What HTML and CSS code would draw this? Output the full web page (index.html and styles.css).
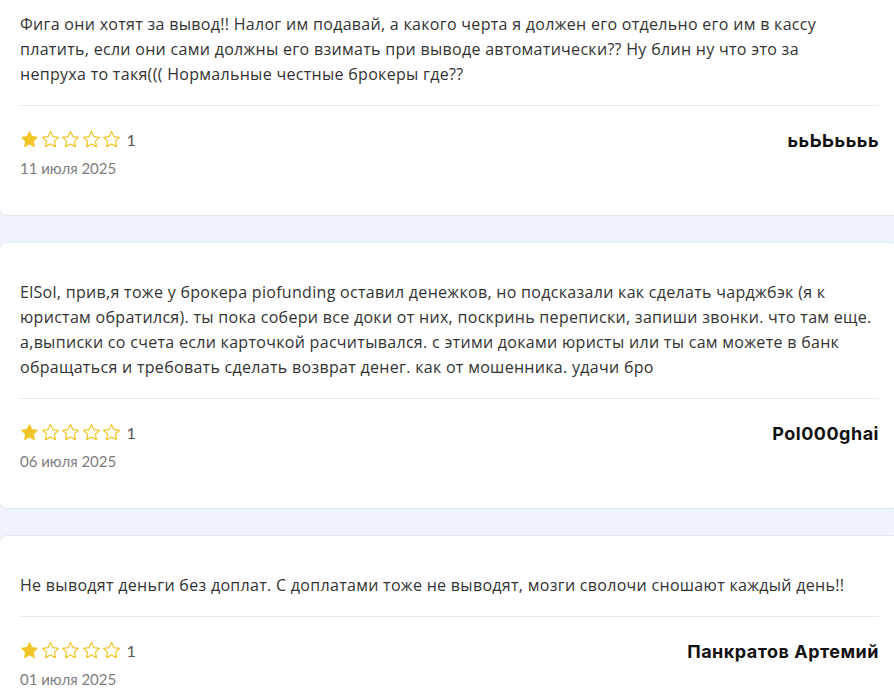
FILE: index.html
```html
<!DOCTYPE html>
<html lang="ru">
<head>
<meta charset="utf-8">
<title>Отзывы</title>
<link rel="stylesheet" href="styles.css">
</head>
<body>
<div class="reviews">
  <div class="card">
    <p class="text">Фига они хотят за вывод!! Налог им подавай, а какого черта я должен его отдельно его им в кассу платить, если они сами должны его взимать при выводе автоматически?? Ну блин ну что это за<br>непруха то такя((( Нормальные честные брокеры где??</p>
    <div class="footer">
      <div class="meta">
        <div class="rating">
          <svg class="star" viewBox="0 0 24 24"><polygon class="on" points="12 2 15.09 8.26 22 9.27 17 14.14 18.18 21.02 12 17.77 5.82 21.02 7 14.14 2 9.27 8.91 8.26"/></svg>
          <svg class="star" viewBox="0 0 24 24"><polygon class="off" points="12 2 15.09 8.26 22 9.27 17 14.14 18.18 21.02 12 17.77 5.82 21.02 7 14.14 2 9.27 8.91 8.26"/></svg>
          <svg class="star" viewBox="0 0 24 24"><polygon class="off" points="12 2 15.09 8.26 22 9.27 17 14.14 18.18 21.02 12 17.77 5.82 21.02 7 14.14 2 9.27 8.91 8.26"/></svg>
          <svg class="star" viewBox="0 0 24 24"><polygon class="off" points="12 2 15.09 8.26 22 9.27 17 14.14 18.18 21.02 12 17.77 5.82 21.02 7 14.14 2 9.27 8.91 8.26"/></svg>
          <svg class="star" viewBox="0 0 24 24"><polygon class="off" points="12 2 15.09 8.26 22 9.27 17 14.14 18.18 21.02 12 17.77 5.82 21.02 7 14.14 2 9.27 8.91 8.26"/></svg>
          <span class="score">1</span>
        </div>
        <div class="date">11 июля 2025</div>
      </div>
      <div class="author">ььЬЬьььь</div>
    </div>
  </div>

  <div class="card">
    <p class="text">ElSol, прив,я тоже у брокера piofunding оставил денежков, но подсказали как сделать чарджбэк (я к юристам обратился). ты пока собери все доки от них, поскринь переписки, запиши звонки. что там еще. а,выписки со счета если карточкой расчитывался. с этими доками юристы или ты сам можете в банк обращаться и требовать сделать возврат денег. как от мошенника. удачи бро</p>
    <div class="footer">
      <div class="meta">
        <div class="rating">
          <svg class="star" viewBox="0 0 24 24"><polygon class="on" points="12 2 15.09 8.26 22 9.27 17 14.14 18.18 21.02 12 17.77 5.82 21.02 7 14.14 2 9.27 8.91 8.26"/></svg>
          <svg class="star" viewBox="0 0 24 24"><polygon class="off" points="12 2 15.09 8.26 22 9.27 17 14.14 18.18 21.02 12 17.77 5.82 21.02 7 14.14 2 9.27 8.91 8.26"/></svg>
          <svg class="star" viewBox="0 0 24 24"><polygon class="off" points="12 2 15.09 8.26 22 9.27 17 14.14 18.18 21.02 12 17.77 5.82 21.02 7 14.14 2 9.27 8.91 8.26"/></svg>
          <svg class="star" viewBox="0 0 24 24"><polygon class="off" points="12 2 15.09 8.26 22 9.27 17 14.14 18.18 21.02 12 17.77 5.82 21.02 7 14.14 2 9.27 8.91 8.26"/></svg>
          <svg class="star" viewBox="0 0 24 24"><polygon class="off" points="12 2 15.09 8.26 22 9.27 17 14.14 18.18 21.02 12 17.77 5.82 21.02 7 14.14 2 9.27 8.91 8.26"/></svg>
          <span class="score">1</span>
        </div>
        <div class="date">06 июля 2025</div>
      </div>
      <div class="author">Pol000ghai</div>
    </div>
  </div>

  <div class="card">
    <p class="text">Не выводят деньги без доплат. С доплатами тоже не выводят, мозги сволочи сношают каждый день!!</p>
    <div class="footer">
      <div class="meta">
        <div class="rating">
          <svg class="star" viewBox="0 0 24 24"><polygon class="on" points="12 2 15.09 8.26 22 9.27 17 14.14 18.18 21.02 12 17.77 5.82 21.02 7 14.14 2 9.27 8.91 8.26"/></svg>
          <svg class="star" viewBox="0 0 24 24"><polygon class="off" points="12 2 15.09 8.26 22 9.27 17 14.14 18.18 21.02 12 17.77 5.82 21.02 7 14.14 2 9.27 8.91 8.26"/></svg>
          <svg class="star" viewBox="0 0 24 24"><polygon class="off" points="12 2 15.09 8.26 22 9.27 17 14.14 18.18 21.02 12 17.77 5.82 21.02 7 14.14 2 9.27 8.91 8.26"/></svg>
          <svg class="star" viewBox="0 0 24 24"><polygon class="off" points="12 2 15.09 8.26 22 9.27 17 14.14 18.18 21.02 12 17.77 5.82 21.02 7 14.14 2 9.27 8.91 8.26"/></svg>
          <svg class="star" viewBox="0 0 24 24"><polygon class="off" points="12 2 15.09 8.26 22 9.27 17 14.14 18.18 21.02 12 17.77 5.82 21.02 7 14.14 2 9.27 8.91 8.26"/></svg>
          <span class="score">1</span>
        </div>
        <div class="date">01 июля 2025</div>
      </div>
      <div class="author">Панкратов Артемий</div>
    </div>
  </div>
</div>
</body>
</html>
```

FILE: styles.css
```css
html, body {
  margin: 0;
  padding: 0;
  background: #eff3fa;
  overflow: hidden;
}

.reviews {
  width: 901px;
  margin-top: -26px;
  margin-left: -1px;
  display: flex;
  flex-direction: column;
  gap: 26px;
}

.card {
  background: #ffffff;
  border: 1px solid #e4e8ef;
  border-radius: 8px;
  padding: 37px 20px 37px 20px;
}

.text {
  margin: 0;
  padding-bottom: 18px;
  border-bottom: 1px solid #e9ebee;
  font-family: "Open Sans", "Noto Sans", sans-serif;
  font-size: 16px;
  letter-spacing: 0.3px;
  line-height: 25px;
  color: #333333;
}

.footer {
  display: flex;
  justify-content: space-between;
  align-items: flex-start;
  padding-top: 23px;
}

.rating {
  display: flex;
  align-items: center;
  gap: 1.5px;
  height: 20px;
}

.star {
  width: 19px;
  height: 19px;
  display: block;
}

.star .on {
  fill: #f2c425;
  stroke: #f2c425;
  stroke-width: 1.2;
  stroke-linejoin: round;
}

.star .off {
  fill: none;
  stroke: #f2c425;
  stroke-width: 1.5;
  stroke-linejoin: round;
}

.score {
  margin-left: 4px;
  font-family: "Lato", "Open Sans", sans-serif;
  font-size: 16px;
  color: #555555;
}

.date {
  margin-top: 9px;
  font-family: "Lato", "Open Sans", sans-serif;
  font-size: 15px;
  line-height: 20px;
  color: #7d7d7d;
}

.author {
  margin-top: 2px;
  font-family: "Inter", "Noto Sans", sans-serif;
  font-weight: 700;
  font-size: 18px;
  letter-spacing: 0.5px;
  line-height: 20px;
  color: #111111;
}
```
